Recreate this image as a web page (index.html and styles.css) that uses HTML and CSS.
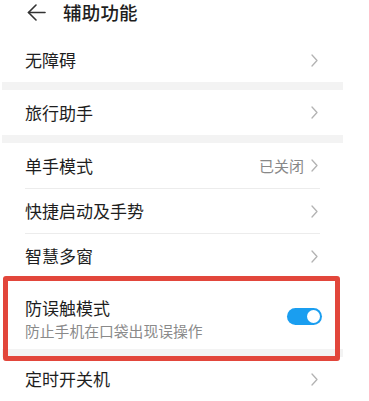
FILE: index.html
```html
<!DOCTYPE html>
<html>

<head>
    <title>辅助功能</title>
    <link rel="stylesheet" href="styles.css">
</head>

<body>
    <div class="screen">
        <div class="header">
            <svg class="back" width="19" height="17" viewBox="0 0 19 17">
                <polyline points="9,1 1.5,8.5 9,16" fill="none" stroke="#333" stroke-width="1.6" stroke-linecap="round" stroke-linejoin="round"/>
                <line x1="1.5" y1="8.5" x2="18" y2="8.5" stroke="#333" stroke-width="1.6" stroke-linecap="round"/>
            </svg>
            <h1 class="title">辅助功能</h1>
        </div>

        <div class="row first">
            <span class="label">无障碍</span>
            <svg class="chevron" width="7" height="13" viewBox="0 0 7 13"><polyline points="1,1 6,6.5 1,12"/></svg>
        </div>
        <div class="band"></div>

        <div class="row">
            <span class="label">旅行助手</span>
            <svg class="chevron" width="7" height="13" viewBox="0 0 7 13"><polyline points="1,1 6,6.5 1,12"/></svg>
        </div>
        <div class="band"></div>

        <div class="row">
            <span class="label">单手模式</span>
            <span class="value">已关闭</span>
            <svg class="chevron" width="7" height="13" viewBox="0 0 7 13"><polyline points="1,1 6,6.5 1,12"/></svg>
        </div>
        <div class="divider"></div>
        <div class="row short">
            <span class="label">快捷启动及手势</span>
            <svg class="chevron" width="7" height="13" viewBox="0 0 7 13"><polyline points="1,1 6,6.5 1,12"/></svg>
        </div>
        <div class="divider"></div>
        <div class="row short">
            <span class="label">智慧多窗</span>
            <svg class="chevron" width="7" height="13" viewBox="0 0 7 13"><polyline points="1,1 6,6.5 1,12"/></svg>
        </div>

        <div class="highlight-wrap">
            <div class="row double">
                <div class="text-block">
                    <span class="label">防误触模式</span>
                    <span class="sub">防止手机在口袋出现误操作</span>
                </div>
                <div class="toggle on"><span class="knob"></span></div>
            </div>
            <div class="band"></div>
            <div class="highlight"></div>
        </div>

        <div class="row short">
            <span class="label">定时开关机</span>
            <svg class="chevron" width="7" height="13" viewBox="0 0 7 13"><polyline points="1,1 6,6.5 1,12"/></svg>
        </div>
    </div>
</body>

</html>
```

FILE: styles.css
```css
body {
    margin: 0;
    background-color: #fff;
    font-family: "Noto Sans CJK SC", "Noto Sans", sans-serif;
    color: #1e1e1e;
}

.screen {
    width: 345px;
    height: 401px;
    overflow: hidden;
}

.header {
    display: flex;
    align-items: center;
    height: 24px;
    padding-left: 27px;
    margin-bottom: 14px;
}

.back {
    margin-right: 17px;
}

.title {
    margin: 0;
    font-size: 18.5px;
    font-weight: 500;
    line-height: 24px;
    letter-spacing: 0.2px;
}

.row {
    display: flex;
    align-items: center;
    height: 45px;
    padding: 0 27px 0 25px;
}

.row.first {
    height: 44px;
}

.row.short {
    height: 44px;
}

.label {
    flex: 1;
    font-size: 17px;
    line-height: 24px;
}

.value {
    font-size: 15px;
    color: #888;
    margin-right: 7px;
}

.chevron polyline {
    fill: none;
    stroke: #b3b3b3;
    stroke-width: 1.3;
    stroke-linecap: round;
    stroke-linejoin: round;
}

.band {
    height: 8px;
    margin: 0 2px;
    background-color: #f3f3f3;
}

.divider {
    height: 1px;
    margin: 0 25px;
    background-color: #ececec;
}

.highlight-wrap {
    position: relative;
}

.row.double {
    height: 71px;
    align-items: flex-start;
    box-sizing: border-box;
    padding-top: 18px;
}

.text-block {
    flex: 1;
    display: flex;
    flex-direction: column;
}

.sub {
    font-size: 14.8px;
    line-height: 22px;
    color: #8a8a8a;
}

.toggle {
    width: 35px;
    height: 17px;
    border-radius: 9px;
    background-color: #d0d0d0;
    margin-top: 12px;
    margin-right: -4px;
    display: flex;
    align-items: center;
    justify-content: flex-start;
    padding: 0 2px;
    box-sizing: border-box;
}

.toggle.on {
    background-color: #1a9ef0;
    justify-content: flex-end;
}

.knob {
    width: 13px;
    height: 13px;
    border-radius: 50%;
    background-color: #fff;
}

.highlight {
    position: absolute;
    top: -2px;
    left: 3px;
    width: 337px;
    height: 85px;
    box-sizing: border-box;
    border: 5px solid #e2463b;
    border-radius: 3px;
}
```
